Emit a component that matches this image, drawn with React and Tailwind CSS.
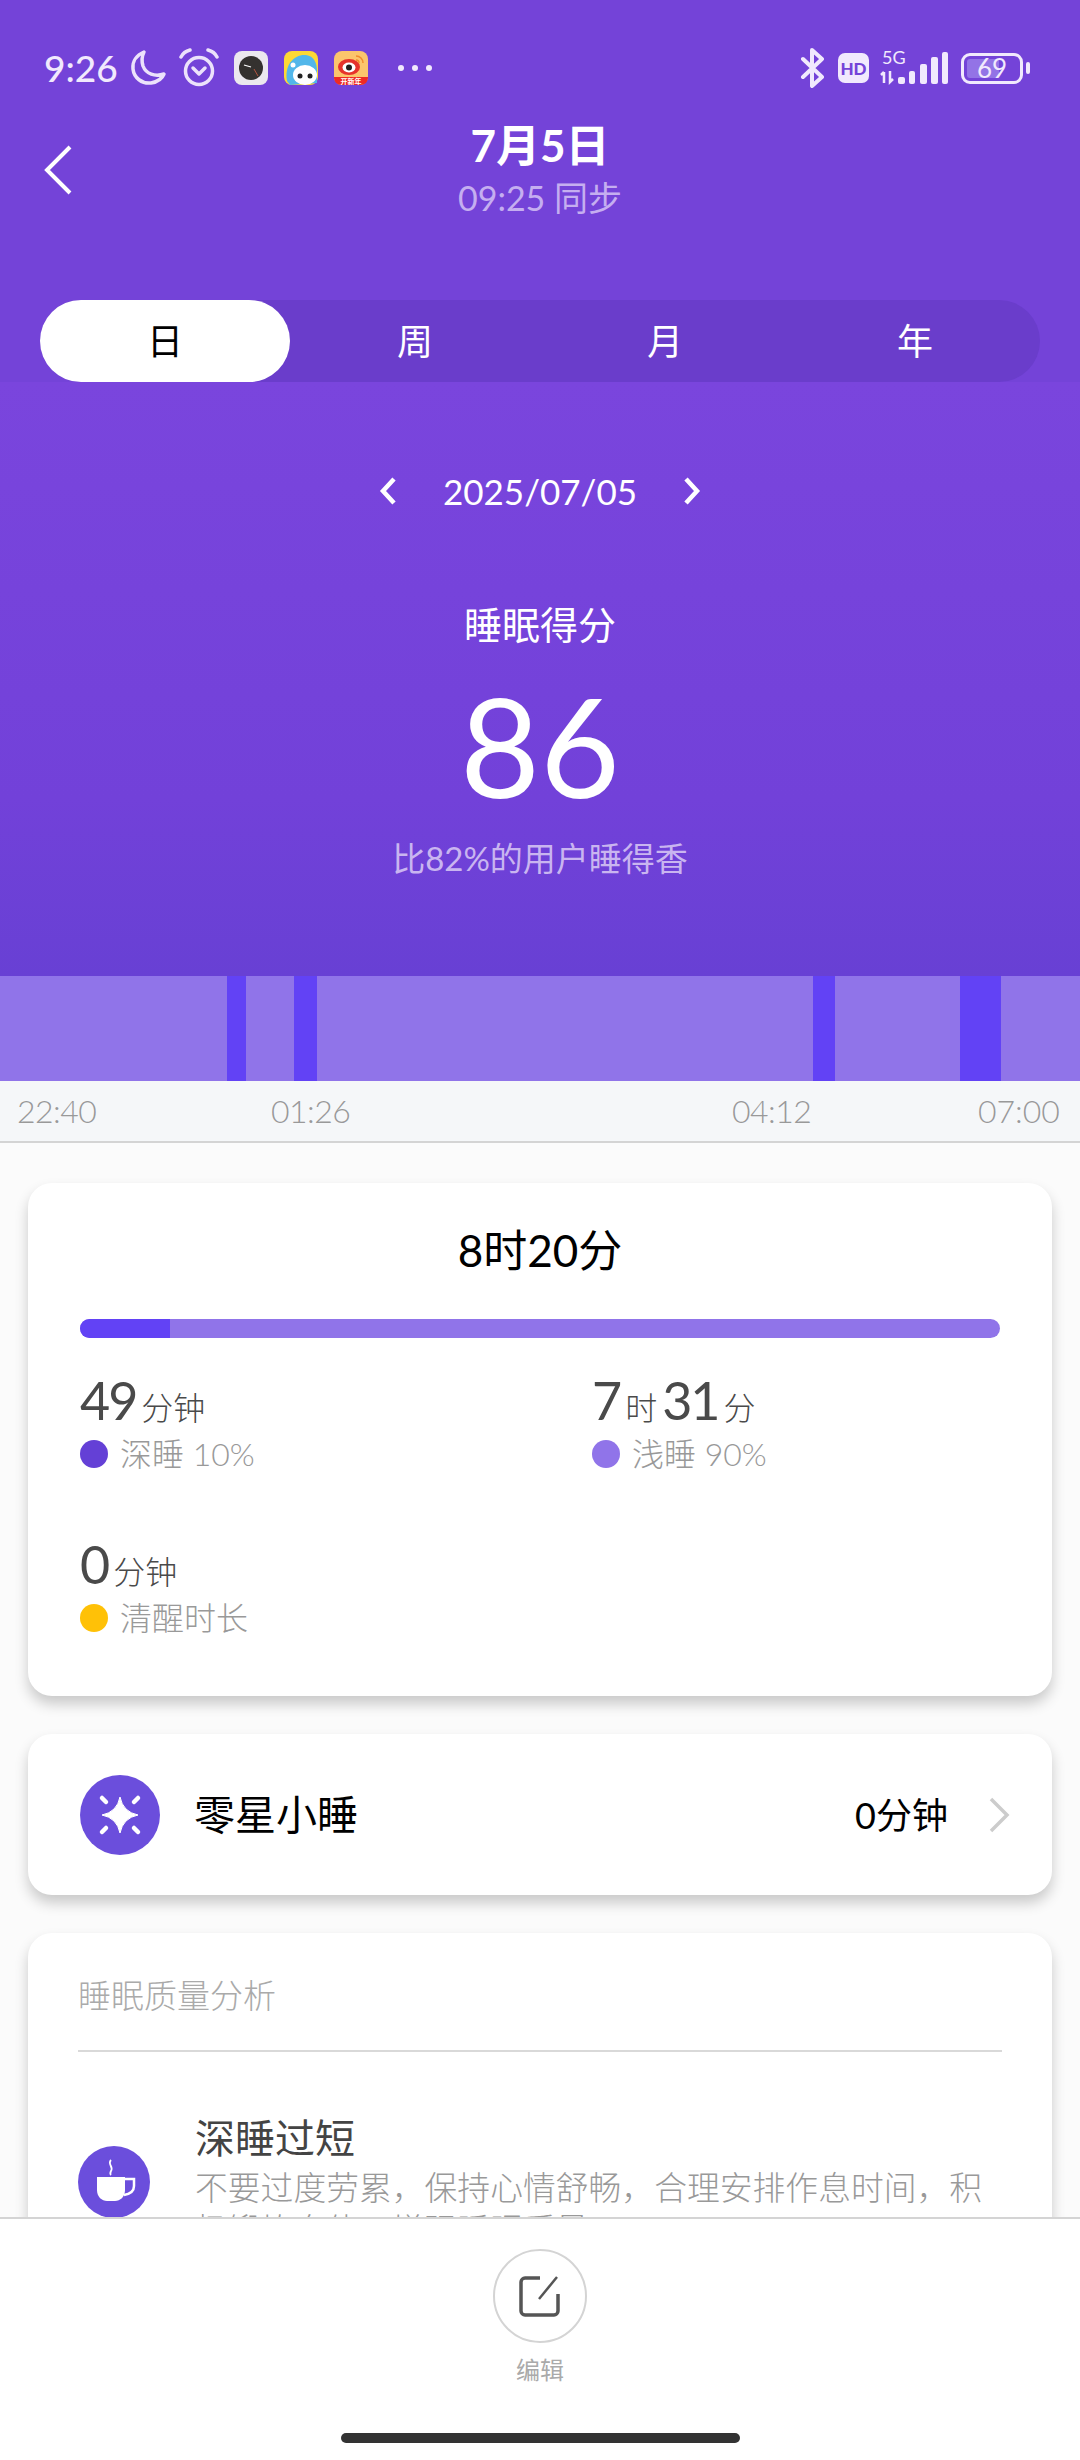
import React from 'react';

const fontStack = { fontFamily: 'Lato, "Noto Sans CJK SC", sans-serif' };

const StatusLeft = () => (
  <div className="flex items-center">
    <span className="text-[37px] leading-[48px] font-medium text-[#f1e9fd] w-[84px]">9:26</span>
    {/* moon */}
    <svg width="38" height="38" viewBox="0 0 38 38" className="ml-[1px]">
      <path d="M15 3 C8 6 3 12 4 20 C5 29 13 35 22 34 C28 33 33 30 35 25 C26 28 17 25 14 17 C12.500 12 13 7 15 3 Z" fill="none" stroke="#ece2fb" strokeWidth="3.500" strokeLinejoin="round" />
    </svg>
    {/* alarm */}
    <svg width="40" height="40" viewBox="0 0 40 40" className="ml-[12px]">
      <circle cx="20" cy="23" r="13.500" fill="none" stroke="#ece2fb" strokeWidth="3.500" />
      <path d="M2 9 C4 5 7 3 11 2 M38 9 C36 5 33 3 29 2" fill="none" stroke="#ece2fb" strokeWidth="3.500" strokeLinecap="round" />
      <path d="M14 20 L20 26 L26 20" fill="none" stroke="#ece2fb" strokeWidth="3.500" strokeLinecap="round" strokeLinejoin="round" />
    </svg>
    {/* clock app */}
    <svg width="34" height="34" viewBox="0 0 34 34" className="ml-[15px]">
      <rect width="34" height="34" rx="8" fill="#ebe8ee" />
      <circle cx="17" cy="17" r="12" fill="#34312f" />
      <path d="M10 14 L17 16" stroke="#fff" strokeWidth="1.200" />
      <path d="M20 18 L24 25" stroke="#b3553f" strokeWidth="1" />
    </svg>
    {/* panda app */}
    <svg width="34" height="34" viewBox="0 0 34 34" className="ml-[16px]">
      <rect width="34" height="34" rx="8" fill="#fdd834" />
      <path d="M3 30 C0 14 10 3 22 4 C30 5 33 12 33 20 L33 32 L6 34 Z" fill="#52b7ea" />
      <ellipse cx="21" cy="24" rx="12" ry="10" fill="#fff" />
      <circle cx="16" cy="25" r="2.500" fill="#222" />
      <circle cx="26" cy="25" r="2.500" fill="#222" />
      <circle cx="9" cy="14" r="2.500" fill="#fff" />
    </svg>
    {/* weibo app */}
    <svg width="34" height="34" viewBox="0 0 34 34" className="ml-[16px]">
      <rect width="34" height="34" rx="8" fill="#fbc56c" />
      <path d="M0 26 H34 V26 C34 31 31 34 26 34 H8 C3 34 0 31 0 26 Z" fill="#ee2a24" />
      <ellipse cx="15" cy="16" rx="11" ry="8" fill="#e6322b" />
      <ellipse cx="15" cy="16.500" rx="6.500" ry="5" fill="#fff" />
      <circle cx="15" cy="16.500" r="3" fill="#222" />
      <path d="M22 5 C26 5 29 8 29 12" fill="none" stroke="#f08a2d" strokeWidth="1.500" />
      <path d="M22 9 C24 9 25 10 25 12" fill="none" stroke="#f08a2d" strokeWidth="1.500" />
      <text x="17" y="32.500" textAnchor="middle" fontSize="7" fill="#fff" fontWeight="700" fontFamily="Noto Sans CJK SC">开新年</text>
    </svg>
    <div className="flex gap-[8px] ml-[30px]">
      <span className="w-[6px] h-[6px] rounded-full bg-[#f1e9fd]" />
      <span className="w-[6px] h-[6px] rounded-full bg-[#f1e9fd]" />
      <span className="w-[6px] h-[6px] rounded-full bg-[#f1e9fd]" />
    </div>
  </div>
);

const StatusRight = () => (
  <div className="flex items-center">
    {/* bluetooth */}
    <svg width="26" height="40" viewBox="0 0 26 40">
      <path d="M3 11 L22 29 L12 38 V2 L22 11 L3 29" fill="none" stroke="#f1e9fd" strokeWidth="4" strokeLinejoin="round" strokeLinecap="round" />
    </svg>
    <div className="ml-[12px] w-[31px] h-[30px] rounded-[7px] bg-[#f1e9fd] flex items-center justify-center text-[17px] leading-none font-black text-[#7443d8]">HD</div>
    {/* 5G + signal */}
    <svg width="68" height="36" viewBox="0 0 68 36" className="ml-[11px]">
      <text x="2" y="14" fontSize="18" fill="#f1e9fd" fontFamily="Lato">5G</text>
      <path d="M4 22 V33 M1 25 L4 22 M10 21 V32 L13 29" fill="none" stroke="#f1e9fd" strokeWidth="2.500" />
      <rect x="18" y="27" width="7" height="7" rx="2" fill="#f1e9fd" />
      <rect x="29" y="21" width="6" height="13" rx="2" fill="#f1e9fd" />
      <rect x="40" y="14" width="7" height="20" rx="2" fill="#f1e9fd" />
      <rect x="51" y="7" width="7" height="27" rx="2" fill="#f1e9fd" />
      <rect x="62" y="2" width="6" height="32" rx="2" fill="#f1e9fd" />
    </svg>
    {/* battery */}
    <div className="ml-[13px] flex items-center">
      <div className="relative w-[62px] h-[31px] rounded-[9px] border-[3px] border-[#f1e9fd] flex items-center justify-center">
        <div className="absolute left-[3px] top-[3px] bottom-[3px] w-[32px] rounded-[3px] bg-[#9373e6]" />
        <span className="relative text-[26px] leading-none text-[#f1e9fd]">69</span>
      </div>
      <div className="ml-[3px] w-[4px] h-[12px] rounded-[2px] bg-[#f1e9fd]" />
    </div>
  </div>
);

const Tab = ({ label, active }) => (
  <div className={active ? 'flex-1 h-full rounded-full bg-white text-black flex items-center justify-center' : 'flex-1 h-full text-white flex items-center justify-center'}>
    {label}
  </div>
);

const Stat = ({ parts, dot, label }) => (
  <div>
    <div className="flex items-baseline h-[60px] leading-[60px] text-[#4a4a4a]">
      {parts.map((p, i) => (
        <span key={i} className={p.unit ? 'text-[32px] font-light mx-[5px]' : 'text-[52px] tracking-[-2px]'}>{p.text}</span>
      ))}
    </div>
    <div className="mt-[2px] flex items-center h-[44px] text-[32px] text-[#999999] font-light">
      <span className={`w-[28px] h-[28px] rounded-full mr-[12px] ${dot}`} />
      {label}
    </div>
  </div>
);

const App = () => (
  <div className="w-[1080px] h-[2460px] flex flex-col overflow-hidden bg-white" style={fontStack}>
    <div className="flex-1 min-h-0 overflow-hidden flex flex-col">
      {/* Header */}
      <div className="h-[382px] shrink-0 bg-[#7443d8] flex flex-col px-[40px] pt-[44px]">
        <div className="flex justify-between items-center h-[48px] pl-[4px] pr-[10px]">
          <StatusLeft />
          <StatusRight />
        </div>
        <div className="grid grid-cols-[1fr_auto_1fr] mt-[28px]">
          <svg width="30" height="50" viewBox="0 0 30 50" className="self-center ml-[3px]">
            <path d="M27 2 L4 25 L27 48" fill="none" stroke="#fff" strokeWidth="4" />
          </svg>
          <div className="text-center">
            <div className="text-[44px] leading-[50px] font-bold text-white">7月5日</div>
            <div className="mt-[6px] text-[34px] leading-[44px] text-[#c5aef0]">09:25 同步</div>
          </div>
        </div>
        <div className="mt-auto h-[82px] rounded-full bg-[#6a3dcb] flex text-[36px]">
          <Tab label="日" active />
          <Tab label="周" />
          <Tab label="月" />
          <Tab label="年" />
        </div>
      </div>

      {/* Score */}
      <div className="h-[594px] shrink-0 bg-gradient-to-b from-[#7a45dd] via-[#7241d9] via-70% to-[#6840d4] text-white flex flex-col items-center pt-[85px]">
        <div className="flex items-center h-[48px] text-[35px]">
          <svg width="18" height="30" viewBox="0 0 18 30" className="mr-[46px]">
            <path d="M15 3 L4 15 L15 27" fill="none" stroke="#fff" strokeWidth="4.500" />
          </svg>
          2025/07/05
          <svg width="18" height="30" viewBox="0 0 18 30" className="ml-[46px]">
            <path d="M3 3 L14 15 L3 27" fill="none" stroke="#fff" strokeWidth="4.500" />
          </svg>
        </div>
        <div className="mt-[84px] h-[50px] leading-[50px] text-[38px]">睡眠得分</div>
        <div className="mt-[26px] h-[140px] leading-[140px] text-[138px]">86</div>
        <div className="mt-[21px] h-[44px] leading-[44px] text-[33px] text-[#c9b5f0]">比82%的用户睡得香</div>
      </div>

      {/* Sleep chart */}
      <div className="h-[105px] shrink-0 flex bg-[#9074e9]">
        <div className="w-[227px]" />
        <div className="w-[19px] bg-[#6242f5]" />
        <div className="w-[48px]" />
        <div className="w-[23px] bg-[#6242f5]" />
        <div className="w-[496px]" />
        <div className="w-[22px] bg-[#6242f5]" />
        <div className="w-[125px]" />
        <div className="w-[41px] bg-[#6242f5]" />
      </div>
      <div className="h-[62px] shrink-0 bg-[#f5f7f9] border-b-2 border-[#d4d4d4] flex items-center px-[17px] text-[32px] font-light text-[#999999]">
        <span className="w-[254px] tracking-[-0.5px]">22:40</span>
        <span className="w-[461px] tracking-[-0.5px]">01:26</span>
        <span className="w-[246px] tracking-[-0.5px]">04:12</span>
        <span>07:00</span>
      </div>

      {/* Cards */}
      <div className="flex-1 min-h-0 overflow-hidden bg-[#fbfbfb] px-[28px] pt-[40px] flex flex-col gap-[38px]">
        <div className="shrink-0 h-[513px] rounded-[24px] bg-white shadow-[0_8px_14px_rgba(0,0,0,0.2)] px-[52px] pt-[42px]">
          <div className="text-center text-[44px] leading-[50px] text-black">8时20分</div>
          <div className="mt-[44px] h-[19px] rounded-full bg-[#9074e9] overflow-hidden">
            <div className="w-[90px] h-full bg-[#6242f5]" />
          </div>
          <div className="mt-[32px] grid grid-cols-[512px_1fr] gap-y-[58px]">
            <Stat parts={[{ text: '49' }, { text: '分钟', unit: true }]} dot="bg-[#6440d6]" label="深睡 10%" />
            <Stat parts={[{ text: '7' }, { text: '时', unit: true }, { text: '31' }, { text: '分', unit: true }]} dot="bg-[#9074e9]" label="浅睡 90%" />
            <Stat parts={[{ text: '0' }, { text: '分钟', unit: true }]} dot="bg-[#ffc107]" label="清醒时长" />
          </div>
        </div>

        <div className="shrink-0 h-[161px] rounded-[24px] bg-white shadow-[0_8px_14px_rgba(0,0,0,0.2)] pl-[52px] pr-[42px] flex items-center">
          <svg width="80" height="80" viewBox="0 0 80 80">
            <circle cx="40" cy="40" r="40" fill="#6b4edc" />
            <path d="M40 22 Q43 37 58 40 Q43 43 40 58 Q37 43 22 40 Q37 37 40 22 Z" fill="#fff" stroke="#fff" strokeWidth="1" strokeLinejoin="round" />
            <path d="M22 23 L26 27 M58 23 L54 27 M22 57 L26 53 M58 57 L54 53" stroke="#fff" strokeWidth="4.500" strokeLinecap="round" />
          </svg>
          <div className="ml-[34px] text-[41px] text-black">零星小睡</div>
          <div className="ml-auto text-[36px] text-black">0分钟</div>
          <svg width="22" height="36" viewBox="0 0 22 36" className="ml-[40px]">
            <path d="M3 2 L19 18 L3 34" fill="none" stroke="#cccccc" strokeWidth="3.500" />
          </svg>
        </div>

        <div className="shrink-0 rounded-[24px] bg-white shadow-[0_8px_14px_rgba(0,0,0,0.2)] px-[50px] pt-[39px] h-[400px]">
          <div className="text-[33px] leading-[46px] text-[#aaaaaa] font-light">睡眠质量分析</div>
          <div className="mt-[32px] border-t-2 border-[#d9d9d9]" />
          <div className="mt-[61px] flex items-start">
            <svg width="72" height="72" viewBox="0 0 72 72" className="mt-[33px] shrink-0">
              <circle cx="36" cy="36" r="36" fill="#6b4edc" />
              <path d="M33 14 C29 18 36 21 33 25 C32 27 32 28 33 29" fill="none" stroke="#fff" strokeWidth="1.800" />
              <path d="M19 31 H47 V44 C47 51 42 55 37 55 H29 C24 55 19 51 19 44 Z" fill="#fff" />
              <path d="M47 33 H56 V40 C56 45 52 48 46 49" fill="none" stroke="#fff" strokeWidth="2.500" />
            </svg>
            <div className="ml-[45px]">
              <div className="text-[40px] leading-[50px] text-[#444444]">深睡过短</div>
              <div className="mt-[4px] w-[800px] text-[32.800px] leading-[42px] text-[#999999] font-light">不要过度劳累，保持心情舒畅，合理安排作息时间，积极锻炼身体，增强睡眠质量</div>
            </div>
          </div>
        </div>
      </div>
    </div>

    {/* Bottom bar */}
    <div className="h-[243px] shrink-0 bg-white border-t-2 border-[#d4d4d4] flex flex-col items-center pt-[30px]">
      <div className="w-[94px] h-[94px] rounded-full border-2 border-[#d4d4d4] flex items-center justify-center">
        <svg width="42" height="42" viewBox="0 0 42 42">
          <path d="M21 3 H6 C4 3 2 5 2 7 V36 C2 38 4 40 6 40 H35 C37 40 39 38 39 36 V19" fill="none" stroke="#555555" strokeWidth="3.500" />
          <path d="M20 24 L38 2" fill="none" stroke="#555555" strokeWidth="2.500" />
        </svg>
      </div>
      <div className="mt-[9px] text-[24px] leading-[36px] text-[#aaaaaa]">编辑</div>
      <div className="mt-[45px] w-[399px] h-[10px] rounded-full bg-[#333333]" />
    </div>
  </div>
);

export default App;
